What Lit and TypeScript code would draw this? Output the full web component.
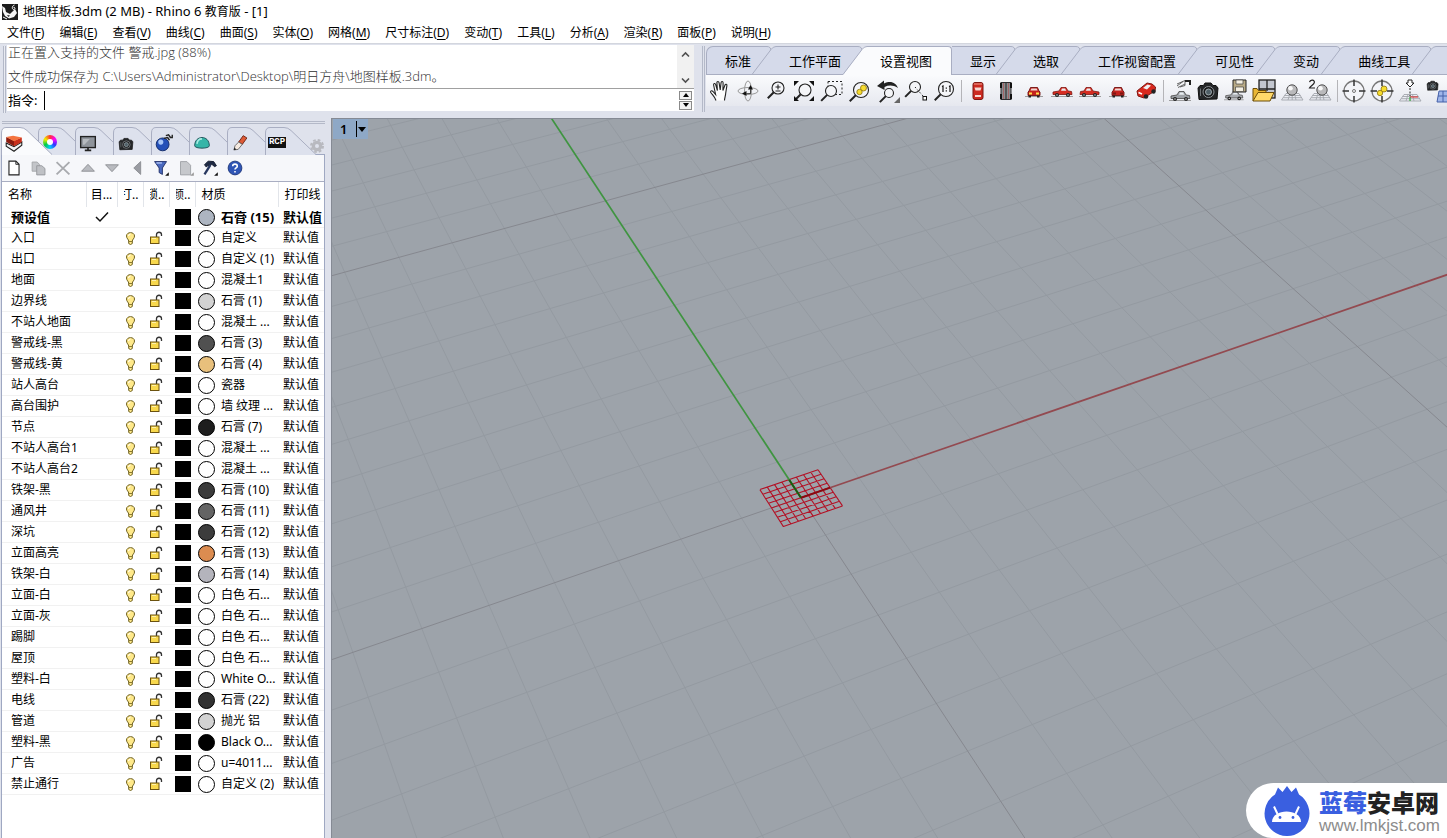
import { LitElement, html, svg, css, nothing, type TemplateResult } from "lit";
import { customElement } from "lit/decorators.js";
import { classMap } from "lit/directives/class-map.js";
import { styleMap } from "lit/directives/style-map.js";

const FONT = css`"Noto Sans", "Noto Sans CJK SC", sans-serif`;

/* ---------- icon drawings, all on a 24 x 24 board ---------- */

const lens = (cx: number, cy: number, r: number) => svg`
  <circle cx=${cx} cy=${cy} r=${r} fill="#f4f5f8" stroke="#222" stroke-width="1.1"/>
  <path d="M${cx - r * 0.7} ${cy + r * 0.7}L${cx - r * 0.7 - 6} ${cy + r * 0.7 + 6}" stroke="#222" stroke-width="2"/>`;

const sideCar = (body: string, dark: string) => svg`
  <path d="M1 17.5H23" stroke="#888" stroke-width="0.8"/>
  <path d="M3 15.5V13L9 12L11 8.500H16L18 12L21.500 12.500L22 15.500Z" fill=${body} stroke=${dark} stroke-width="0.8"/>
  <path d="M11 11.800L12 9.500H15L16.300 11.800Z" fill="#e8eef2"/>
  <circle cx="7" cy="16" r="2" fill="#222"/><circle cx="7" cy="16" r="0.800" fill="#ccc"/>
  <circle cx="18" cy="16" r="2" fill="#222"/><circle cx="18" cy="16" r="0.800" fill="#ccc"/>`;

const frontCar = (lamp: string) => svg`
  <path d="M3 17.500H21" stroke="#888" stroke-width="0.8"/>
  <path d="M7 12L8.500 8.500H15.500L17 12L18 13V16.500H6V13Z" fill="#c5211d" stroke="#701210" stroke-width="0.900"/>
  <path d="M8.500 11.500L9.300 9.500H14.700L15.500 11.500Z" fill="#efd9d6"/>
  <path d="M7 13.500H10V15.500H7ZM14 13.500H17V15.500H14Z" fill=${lamp}/>
  <path d="M6.500 16.500H9V18.500H6.500ZM15 16.500H17.500V18.500H15Z" fill="#222"/>`;

const gridFloor = svg`
  <path d="M6 14.500H19L23 21H1.500ZM4.500 16.500H20.500M3.300 18.700H21.800M10 14.500L8 21M14.500 14.500L16 21M12.200 14.500V21" fill="none" stroke="#a3a6ad" stroke-width="0.9"/>`;

const ball = (cx: number) => svg`
  <circle cx=${cx} cy="11" r="5.200" fill="#b9b9bb" stroke="#444" stroke-width="0.9"/>
  <circle cx=${cx - 1.5} cy="9.300" r="2.300" fill="#f8f8f8"/>`;

const target = svg`
  <circle cx="12" cy="12" r="10" fill="#f3f4f8" stroke="#777" stroke-width="1.3"/>
  <path d="M12 0.500V7M12 17V23.500M0.500 12H7M17 12H23.500" stroke="#333" stroke-width="1.5"/>`;

const camera = svg`
  <path d="M2 9L4 6.500H7.500L9 4H15L17 6.500H20L22 9L21 20L3 20.500Z" fill="#242628" stroke="#101010"/>
  <circle cx="12.500" cy="13" r="5.500" fill="#17191b" stroke="#8c9094"/>
  <circle cx="12.500" cy="13" r="3" fill="#506068" stroke="#b8c0c4" stroke-width="0.8"/>
  <path d="M4.500 9.500V17" stroke="#6d7275"/>`;

const yellowPair = (x: number, y: number) => svg`
  <circle cx=${x + 2.5} cy=${y - 2} r="3" fill="#f7dc2e" stroke="#8c7410" stroke-width="0.8"/>
  <circle cx=${x - 1.5} cy=${y + 2} r="2.700" fill="#f7dc2e" stroke="#8c7410" stroke-width="0.8"/>`;

const ICONS: Record<string, TemplateResult> = {
  pan: svg`<path d="M8 21.500C7 18 4.500 16 2.800 13.500C2 12 3.600 11 5 12.500L7.600 15.500L5.600 6C5.300 4.300 7.200 3.900 7.700 5.600L9.400 11.500L8.900 3.800C8.900 2 10.800 2 11.100 3.800L12.200 11L13.100 3.500C13.400 1.900 15.200 2.200 15.100 3.900L14.900 11.500L17 6C17.600 4.600 19.200 5.200 18.900 6.700L17.800 13.500C17.500 17 16.600 19 16.500 21.500" fill="#fdfdfd" stroke="#222" stroke-width="1.1"/>`,
  orbit: svg`<ellipse cx="12" cy="12" rx="10" ry="3.500" fill="none" stroke="#999"/><ellipse cx="12" cy="12" rx="3.500" ry="10" fill="none" stroke="#999"/><path d="M6 14.500L10.500 12V17ZM14.500 6L12 10.500H17Z" fill="#111"/><path d="M10 14.700L15 14.500M14.500 10V14.500" stroke="#444"/>`,
  zoomPm: svg`${lens(14, 9, 6)}<path d="M11.500 8H16.500M14 5.500V10.500M11.500 12H16.500" stroke="#222" stroke-width="1.1"/>`,
  zoomExt: svg`${lens(13, 11, 6)}<path d="M2 2H7L2 7ZM22 2H17L22 7ZM2 22H7L2 17ZM22 22H17L22 17Z" fill="#111"/>`,
  zoomWin: svg`<rect x="8" y="2.500" width="14" height="13" fill="none" stroke="#222" stroke-dasharray="2 2"/>${lens(11, 12, 5.500)}`,
  zoomSel: svg`${lens(13, 11, 7.500)}${yellowPair(13, 11)}`,
  undoView: svg`<path d="M1 7L8 1.500V4.500C15 1 20 4 22 9C17 6 13 6 8.500 8V11Z" fill="#222"/>${lens(13, 14, 4.500)}<path d="M24 18V24H18Z" fill="#666"/>`,
  zoomTgt: svg`${lens(11, 8, 5.500)}<path d="M11 8L19 17" stroke="#222" stroke-dasharray="1.500 2"/><rect x="19" y="17.500" width="3.500" height="3.500" fill="#fff" stroke="#111"/>`,
  zoom11: svg`${lens(14, 10, 7.500)}<path d="M10 7.500L11 7V13M17 7.500L18 7V13M14.300 8.500V9.700M14.300 11.300V12.500" stroke="#111" stroke-width="1.200" fill="none"/>`,
  carTop: svg`<rect x="7" y="3.500" width="10" height="17" rx="2" fill="#cc2a20" stroke="#7d1712"/><path d="M8.500 8.500H15.500L14.500 11.500H9.500ZM9 16H15V18H9Z" fill="#f6d8d2"/><path d="M8 5H16" stroke="#f0a090"/>`,
  carBottom: svg`<rect x="7" y="3.500" width="10" height="17" fill="#8a8c90" stroke="#2c2c2e"/><path d="M12 4V20" stroke="#444" stroke-width="1.500"/><path d="M7 4V9M17 4V9M7 15V20M17 15V20" stroke="#111" stroke-width="2"/><path d="M9.500 4V20M14.500 4V20" stroke="#a55" stroke-width="0.700"/>`,
  carFront: frontCar("#ffe14a"),
  carRight: sideCar("#d62d22", "#7d1712"),
  carLeft: svg`<g transform="translate(24 0) scale(-1 1)">${sideCar("#d62d22", "#7d1712")}</g>`,
  carBack: frontCar("#7d1712"),
  carPersp: svg`<path d="M3 12L8 8L13 4L18 5L21.500 8L21 12L16 15L10 19L4 17Z" fill="#d8281e" stroke="#7d1712"/><path d="M9 9L13.500 5.500L17 6.500L13 10.500Z" fill="#eef2f5"/><path d="M4.500 13.500L8 15" stroke="#fff" stroke-width="1.500"/><circle cx="12" cy="17.500" r="2.300" fill="#222"/><circle cx="19.500" cy="12.500" r="2.200" fill="#222"/>`,
  carCone: svg`<g transform="translate(0 4)">${sideCar("#9fa3a8", "#444")}</g><path d="M9 5L17 1.500V6.500L12 8M9 7L15 2.500M10 8.500L17 5" fill="none" stroke="#555" stroke-width="0.900"/><path d="M17 1H23V6H21V3H17Z" fill="#222"/>`,
  camera,
  carSave: svg`<g transform="translate(-1 5) scale(0.9)">${sideCar("#a8abb0", "#444")}</g><path d="M9 1H22V13H9Z" fill="#b9ab87" stroke="#222"/><path d="M12 1H19V5H12ZM11.500 8H19.500V12.500H11.500Z" fill="#f4f0e4" stroke="#444" stroke-width="0.700"/>`,
  openView: svg`<rect x="7" y="1" width="16" height="18" fill="#c2c6cf" stroke="#222" stroke-width="1.300"/><path d="M15 1V12M7 10H23" stroke="#222" stroke-width="1.300"/><path d="M1 22V9.500H5L6.500 11.500H14V14" fill="#e9b634" stroke="#6b4d08"/><path d="M1 22L6 13.500H22L18 22Z" fill="#ffd969" stroke="#6b4d08"/>`,
  ballGrid: svg`${gridFloor}${ball(12)}`,
  ballGrid2: svg`${gridFloor}${ball(14)}<path d="M1.500 3.200C2.200 0.200 7 0.600 6.300 3.700C5.900 5.700 2.500 7 1.500 9H7" fill="none" stroke="#222" stroke-width="1.200"/>`,
  target: svg`${target}<circle cx="12" cy="12" r="1.500" fill="none" stroke="#777"/>`,
  targetSel: svg`${target}${yellowPair(11.500, 12)}`,
  plumb: svg`<g transform="translate(0 1)">${gridFloor}</g><path d="M10 1H14V4H16L12 8L8 4H10Z" fill="#fff" stroke="#222"/><path d="M12 9V17" stroke="#222" stroke-dasharray="2 1.500"/><path d="M12 18H20" stroke="#d22"/><path d="M12 18V22" stroke="#2a2"/>`,
  camPlane: svg`<g transform="translate(0 0) scale(0.55)">${camera}</g><path d="M13 12H23V23H11Z" fill="#9fb6ea" stroke="#4560a8"/><path d="M17 12V23M12 17H23" stroke="#4560a8"/>`,

  layers: svg`<path d="M3.500 12L12 16L20.500 11V14.500L12 21L3.500 15.500Z" fill="#f4f4f4" stroke="#222" stroke-width="1.200"/><path d="M3.500 5.500L12 9.500V15.500L3.500 11Z" fill="#8d1c10"/><path d="M12 9.500L20.500 6V11L12 15.500Z" fill="#c9301c"/><path d="M3.500 5.500L11 4L20.500 6L12 10Z" fill="#f4743f"/>`,
  display: svg`<rect x="4" y="5" width="16" height="12" fill="#8f949b" stroke="#222" stroke-width="1.500"/><path d="M6.500 7.500H14L8 14H6.500Z" fill="#b6babf"/><path d="M12 17V19.500M8.500 20H15.500" stroke="#222" stroke-width="1.800"/>`,
  camSmall: svg`<g transform="translate(3 4) scale(0.75)">${camera}</g>`,
  render: svg`<circle cx="10.500" cy="13.500" r="7" fill="#2450b8" stroke="#122a66"/><circle cx="8.500" cy="11" r="2.800" fill="#a8c6f7"/><path d="M14 4L17 3L19 6H21V3M12 7L16 6L18 9" fill="none" stroke="#222" stroke-width="1.500"/>`,
  dome: svg`<path d="M4 15C4 3 20 3 20 15C20 18.500 4 18.500 4 15Z" fill="#36b5a8" stroke="#1d4f55"/><path d="M6.500 13C7 8 10 7.500 12 7.500" stroke="#a8ece2" stroke-width="1.700" fill="none"/>`,
  pen: svg`<path d="M15.500 4L19.500 6.500L14.500 13.500L10.500 11Z" fill="#dd5a36" stroke="#6b2312"/><path d="M10.500 11L14.500 13.500L10 19L5.500 19.500L6.500 15Z" fill="#f5e9df" stroke="#666"/><path d="M5 20L6 17L8 19Z" fill="#222"/>`,
  gear: svg`<circle cx="12" cy="12" r="5.500" fill="none" stroke="#b8b9bf" stroke-width="5"/><circle cx="12" cy="12" r="9" fill="none" stroke="#b8b9bf" stroke-width="3" stroke-dasharray="4 3.070"/>`,

  newDoc: svg`<path d="M6.500 4.500H14L17.500 8V19.500H6.500Z" fill="#fff" stroke="#222" stroke-width="1.200"/><path d="M14 4.500V8H17.500" fill="none" stroke="#222"/>`,
  copyDoc: svg`<path d="M4.500 5.500H10L12.500 8V15.500H4.500Z" fill="#c3c5c9" stroke="#a4a6aa"/><path d="M9.500 9.500H15L18.500 12.500V19.500H9.500Z" fill="#bfc1c5" stroke="#96989c"/>`,
  cross: svg`<path d="M5 5.500L19 19M19 5.500L5 19" stroke="#a8aaae" stroke-width="2"/>`,
  up: svg`<path d="M5 15.500L12 8L19 15.500Z" fill="#b9bbc0" stroke="#8c8e93"/>`,
  down: svg`<path d="M5 8.500L12 16L19 8.500Z" fill="#b9bbc0" stroke="#8c8e93"/>`,
  left: svg`<path d="M16 5V19L8.500 12Z" fill="#9a9ca2" stroke="#8c8e93"/>`,
  filter: svg`<path d="M5 5H18L13.500 12V19L10 17V12Z" fill="#4a69bf" stroke="#1d2c66"/><path d="M7 6.500H13" stroke="#b0c4f5" stroke-width="1.500"/><path d="M20.500 16.500V20.500H16.500Z" fill="#111"/>`,
  sheet: svg`<path d="M6 5H13L17 9V19.500H6Z" fill="#c6c8cc" stroke="#a0a2a6"/><path d="M20.500 16.500V20.500H16.500Z" fill="#999"/>`,
  hammer: svg`<path d="M6 8.500L10 4.500L16 5L19 9.500L17 10.500L14 8L9.500 9.500L8 11Z" fill="#1f2a44" stroke="#10182c"/><path d="M12.500 8.500L6 19" stroke="#27375f" stroke-width="2.500"/><path d="M20.500 16.500V20.500H16.500Z" fill="#111"/>`,
  help: svg`<circle cx="12" cy="12" r="7.500" fill="#2f55b5" stroke="#1c3478"/><path d="M9.500 10C9.500 7 14.500 7 14.500 10C14.500 11.800 12 12 12 13.700M12 15.200V17" fill="none" stroke="#fff" stroke-width="1.700"/>`,
};

const icon = (name: string, size = 24) =>
  html`<svg width=${size} height=${size} viewBox="0 0 24 24" aria-hidden="true">${ICONS[name]}</svg>`;

/* ---------- title and menu ---------- */

const MENUS: [string, string][] = [
  ["文件", "F"], ["编辑", "E"], ["查看", "V"], ["曲线", "C"], ["曲面", "S"], ["实体", "O"], ["网格", "M"],
  ["尺寸标注", "D"], ["变动", "T"], ["工具", "L"], ["分析", "A"], ["渲染", "R"], ["面板", "P"], ["说明", "H"],
];

@customElement("menu-strip")
export class MenuStrip extends LitElement {
  static styles = css`
    :host { display: block; background: #fff; color: #000; font: 12px/20px ${FONT}; }
    .title { display: flex; align-items: center; gap: 5px; height: 23px; padding-left: 2px; }
    .title h1 { margin: 0; font: inherit; font-size: 13px; }
    .cn { font-size: 12px; }
    .menu { display: flex; gap: 15px; height: 20px; padding-left: 7px; }
    .item { border: 0; padding: 0; background: none; font: inherit; color: inherit; white-space: nowrap; }
    .key { text-decoration: underline; text-underline-offset: 2px; }
  `;
  render() {
    return html`
      <header class="title">
        <svg width="16" height="16" viewBox="0 0 16 16" aria-hidden="true">
          <rect width="16" height="16" fill="#1c1c1c"/>
          <path d="M0 2L3 4L4 8L8 10L10 8L13 5L15 9L12 13L7 14.500L3 12L1 8Z" fill="#f4f4f4"/>
          <path d="M5 11L8 11.500L6.500 13Z" fill="#222"/><path d="M12.500 1C10 1.500 9.500 5 11.500 5.500C13.500 5.500 13.500 3 11.500 3.300" fill="none" stroke="#fff"/>
          <path d="M1 13L5 15" stroke="#fff"/>
        </svg>
        <h1><span class="cn">地图样板</span>.3dm (2 MB) - Rhino 6 <span class="cn">教育版</span> - [1]</h1>
      </header>
      <nav class="menu">
        ${MENUS.map(([t, k]) => html`<button class="item">${t}(<span class="key">${k}</span>)</button>`)}
      </nav>`;
  }
}

/* ---------- command history and prompt ---------- */

@customElement("command-area")
export class CommandArea extends LitElement {
  static styles = css`
    :host { display: flex; flex: none; width: 694px; box-sizing: border-box; padding: 1px 0 0 3px; font: 13px/20px ${FONT}; }
    .grip { flex: none; width: 3px; height: 67px; margin-top: 1px; box-sizing: border-box; border: solid #b4b9c8; border-width: 0 1px; background: #e9ebf2; }
    .box { flex: 1; min-width: 0; background: #fff; margin-left: 1px; height: 66px; }
    .history { display: flex; height: 43px; border-bottom: 1px solid #a0a0a0; overflow: hidden; }
    .lines { flex: 1; display: flex; flex-direction: column; justify-content: flex-end; color: #303030; font-family: "Open Sans", "Noto Sans CJK SC", sans-serif; font-weight: 300; }
    .line { margin: 0; line-height: 24px; white-space: nowrap; padding-left: 1px; }
    .scroll { width: 17px; background: #f1f1f1; display: flex; flex-direction: column; justify-content: space-between; align-items: center; padding: 6px 0 4px; box-sizing: border-box; }
    .prompt { display: flex; align-items: center; height: 22px; padding: 0 2px 0 1px; color: #000; }
    .caret { width: 1px; height: 19px; background: #000; margin-left: 7px; }
    .entry { flex: 1; border: 0; outline: 0; padding: 0; font: inherit; background: none; }
    .spin { display: flex; flex-direction: column; gap: 1px; }
    .step { width: 13px; height: 9px; padding: 0; border: 1px solid #8a8a8a; background: #f2f2f2; display: grid; place-items: center; }
  `;
  render() {
    return html`
      <div class="grip"></div>
      <div class="box">
        <div class="history">
          <div class="lines">
            <p class="line">正在置入支持的文件 警戒.jpg (88%)</p>
            <p class="line">文件成功保存为 C:\\Users\\Administrator\\Desktop\\明日方舟\\地图样板.3dm。</p>
          </div>
          <div class="scroll">
            <svg width="9" height="7" viewBox="0 0 9 7"><path d="M1 5.500L4.500 2L8 5.500" fill="none" stroke="#505050" stroke-width="1.600"/></svg>
            <svg width="9" height="7" viewBox="0 0 9 7"><path d="M1 1.500L4.500 5L8 1.500" fill="none" stroke="#505050" stroke-width="1.600"/></svg>
          </div>
        </div>
        <div class="prompt">
          <label for="cmd">指令:</label><span class="caret"></span>
          <input id="cmd" class="entry" type="text" />
          <div class="spin">
            <button class="step" aria-label="上"><svg width="6" height="4"><path d="M0 4L3 0L6 4Z"/></svg></button>
            <button class="step" aria-label="下"><svg width="6" height="4"><path d="M0 0L3 4L6 0Z"/></svg></button>
          </div>
        </div>
      </div>`;
  }
}

/* ---------- tabbed toolbar ---------- */

const TABS = ["标准", "工作平面", "设置视图", "显示", "选取", "工作视窗配置", "可见性", "变动", "曲线工具"];
const ACTIVE = 2;
const TOOLS = [
  "pan", "orbit", "zoomPm", "zoomExt", "zoomWin", "zoomSel", "undoView", "zoomTgt", "zoom11", "|",
  "carTop", "carBottom", "carFront", "carRight", "carLeft", "carBack", "carPersp", "|",
  "carCone", "camera", "carSave", "openView", "ballGrid", "ballGrid2", "|",
  "target", "targetSel", "plumb", "camPlane",
];

@customElement("tool-tabs")
export class ToolTabs extends LitElement {
  static styles = css`
    :host { display: flex; flex: 1; min-width: 0; padding: 2px 0 0 8px; overflow: hidden; font: 13px/20px ${FONT}; }
    .grip { flex: none; width: 3px; height: 66px; box-sizing: border-box; border: solid #b4b9c8; border-width: 0 1px; }
    .col { flex: 1; min-width: 0; margin-left: 1px; }
    .tabs { display: flex; height: 29px; }
    .slant { flex: none; display: block; }
    .tab { flex: none; box-sizing: border-box; height: 29px; padding: 1px 2px 0 13px; border: solid #a9aec2; border-width: 1px 0; background: #d5daea; font: inherit; color: #000; white-space: nowrap; }
    .tab.first { padding: 1px 1px 0 18px; border-left-width: 1px; border-top-left-radius: 7px; }
    .tab.on { background: #fafbfd; padding: 0 19px 0 13px; border-width: 1px 1px 0 0; border-top-right-radius: 4px; }
    .tab.after { padding-left: 18px; padding-right: 0; }
    .rest { flex: 1; background: #d5daea; border: solid #a9aec2; border-width: 1px 0; }
    .tools { display: flex; align-items: center; height: 31px; background: linear-gradient(#fafbfd, #e6e8ef); }
    .tool { flex: none; width: 28px; height: 28px; padding: 0; border: 0; background: none; display: grid; place-items: center; }
    .sep { flex: none; width: 1px; height: 22px; background: #b4b4b8; margin: 0 2px 0 3px; }
  `;
  private slant(on: boolean) {
    return html`<svg class="slant" width="24" height="29" viewBox="0 0 24 29">
      <path d="M0 0.500H14Q19 0.500 19 5V29H0Z" fill="#d5daea"/>
      <path d="M0 0.500H15Q19 0.500 19 5V7" fill="none" stroke="#a9aec2"/>
      <path d="M0 29L19 3.500Q21 0.500 24 0.500V29Z" fill=${on ? "#fafbfd" : "#d5daea"}/>
      <path d="M0 28.500L19 3.500Q21 0.500 24 0.500" fill="none" stroke="#a9aec2"/>
      ${on ? nothing : svg`<path d="M0 28.500H24" stroke="#a9aec2"/>`}
    </svg>`;
  }
  render() {
    return html`
      <div class="grip"></div>
      <div class="col">
        <div class="tabs" role="tablist">
          ${TABS.map((t, i) => html`
            ${i > 0 && i !== ACTIVE + 1 ? this.slant(i === ACTIVE) : nothing}
            <button role="tab" class=${classMap({ tab: true, first: i === 0, on: i === ACTIVE, after: i === ACTIVE + 1 })}>${t}</button>`)}
          ${this.slant(false)}<div class="rest"></div>
        </div>
        <div class="tools">
          ${TOOLS.map((n) => n === "|" ? html`<span class="sep"></span>` : html`<button class="tool" aria-label=${n}>${icon(n)}</button>`)}
        </div>
      </div>`;
  }
}

/* ---------- layer panel ---------- */

interface Layer { name: string; fill: string; material: string; current?: boolean }
const W = "#fff";
const LAYERS: Layer[] = ([
  ["预设值", "#adb5c1", "石膏 (15)"], ["入口", W, "自定义"], ["出口", W, "自定义 (1)"], ["地面", W, "混凝土1"],
  ["边界线", "#d2d2d2", "石膏 (1)"], ["不站人地面", W, "混凝土 ..."], ["警戒线-黑", "#505050", "石膏 (3)"],
  ["警戒线-黄", "#e8c07c", "石膏 (4)"], ["站人高台", W, "瓷器"], ["高台围护", W, "墙 纹理 ..."],
  ["节点", "#1e1e1e", "石膏 (7)"], ["不站人高台1", W, "混凝土 ..."], ["不站人高台2", W, "混凝土 ..."],
  ["铁架-黑", "#3c3c3c", "石膏 (10)"], ["通风井", "#646464", "石膏 (11)"], ["深坑", "#3c3c3c", "石膏 (12)"],
  ["立面高亮", "#dc8c50", "石膏 (13)"], ["铁架-白", "#b4b4bc", "石膏 (14)"], ["立面-白", W, "白色 石..."],
  ["立面-灰", W, "白色 石..."], ["踢脚", W, "白色 石..."], ["屋顶", W, "白色 石..."], ["塑料-白", W, "White O..."],
  ["电线", "#323232", "石膏 (22)"], ["管道", "#d2d2d2", "抛光 铝"], ["塑料-黑", "#000", "Black O..."],
  ["广告", W, "u=4011..."], ["禁止通行", W, "自定义 (2)"],
] as [string, string, string][]).map(([name, fill, material], i) => ({ name, fill, material, current: i === 0 }));

const PANEL_TABS = ["layers", "wheel", "display", "camSmall", "render", "dome", "pen", "rcp"];
const PANEL_TOOLS = ["newDoc", "copyDoc", "cross", "up", "down", "left", "filter", "sheet", "hammer", "help"];

@customElement("layer-panel")
export class LayerPanel extends LitElement {
  static styles = css`
    :host { display: flex; flex-direction: column; flex: none; width: 331px; box-sizing: border-box; padding: 3px 6px 0 1px; background: #dfe2ec; color: #000; font: 12px/20px ${FONT}; }
    .grip { height: 3px; box-sizing: border-box; border: solid #b4b9c8; border-width: 1px 0; margin: 0 0 3px 1px; flex: none; }
    .tabs { display: flex; height: 27px; flex: none; }
    .tab { position: relative; flex: none; width: 38px; height: 27px; padding: 0; border: 0; background: none; }
    .tab:nth-child(-n + 2) { width: 37px; }
    .tab.on { z-index: 1; }
    .shape { position: absolute; left: 0; top: 0; }
    .glyph { position: absolute; left: 2px; top: 5px; width: 20px; height: 20px; display: grid; place-items: center; }
    .wheel { width: 6px; height: 6px; border-radius: 50%; background: #fff; }
    .ring { width: 14px; height: 14px; border-radius: 50%; background: conic-gradient(#f33, #f0f, #33f, #0cf, #0c4, #ee0, #f33); display: grid; place-items: center; }
    .rcp { width: 18px; background: #111; color: #fff; font: bold 9px/11px "Liberation Mono", monospace; text-align: center; }
    .gear { margin: 11px 0 0 auto; width: 16px; height: 16px; padding: 0; border: 0; background: none; z-index: 1; }
    .gear svg { display: block; }
    .panel { flex: 1; border: solid #9fa8c2; border-width: 1px 1px 0; background: #fff; overflow: hidden; box-sizing: border-box; }
    .tools { display: flex; align-items: center; height: 27px; background: #f6f7fa; border-bottom: 1px solid #a9aec2; box-sizing: border-box; }
    .tool { width: 24px; height: 24px; padding: 0; border: 0; background: none; margin-right: 1px; display: grid; place-items: center; }
    .tool:nth-child(even) { margin-right: 0; }
    .layers { width: 100%; border-collapse: collapse; table-layout: fixed; }
    th { height: 25px; padding: 0; text-align: left; font-weight: normal; border-right: 1px solid #e2e5ea; overflow: hidden; white-space: nowrap; }
    th:last-child { border-right: 0; }
    td { height: 20px; padding: 0; border-bottom: 1px solid #f1f1f1; white-space: nowrap; overflow: hidden; line-height: 20px; }
    .name { padding-left: 9px; }
    th.name { padding-left: 6px; }
    .mid { text-align: center; }
    .mid svg { display: block; margin: 0 auto; }
    .clip { display: flex; justify-content: flex-end; width: 15px; margin-left: 6px; overflow: hidden; }
    .swatch { width: 16px; height: 16px; background: #000; margin-left: 6px; }
    .mat { display: flex; align-items: center; gap: 6px; padding-left: 3px; }
    .dot { flex: none; width: 15px; height: 15px; border: 1px solid #000; border-radius: 50%; }
    .print { padding-left: 5px; }
    .current td { font-weight: bold; font-size: 13px; }
  `;
  private glyph(n: string) {
    if (n === "wheel") return html`<span class="ring"><span class="wheel"></span></span>`;
    if (n === "rcp") return html`<span class="rcp">RCP</span>`;
    return icon(n, 22);
  }
  private bulb() {
    return html`<svg width="11" height="15" viewBox="0 0 11 15"><path d="M3.700 10C3.700 8.500 1.500 7.500 1.500 5C1.500 0.500 9.500 0.500 9.500 5C9.500 7.500 7.300 8.500 7.300 10V12.500Q5.500 14.500 3.700 12.500Z" fill="#ffe98a" stroke="#6e6020"/><path d="M3.700 10.500H7.300" stroke="#8a7a30"/><path d="M3.500 5Q4 3 5.500 3" fill="none" stroke="#fff"/></svg>`;
  }
  private lock() {
    return html`<svg width="14" height="14" viewBox="0 0 14 14"><path d="M7.500 6V3.500C7.500 0.500 12.500 0.500 12.500 3.500V5" fill="none" stroke="#333" stroke-width="1.300"/><rect x="1.500" y="6" width="8.500" height="6.500" fill="#f8d84c" stroke="#6b5210"/><path d="M3 7.500H7" stroke="#fff2ae"/></svg>`;
  }
  render() {
    return html`
      <div class="grip"></div>
      <div class="tabs" role="tablist">
        ${PANEL_TABS.map((n, i) => html`
          <button role="tab" aria-label=${n} class=${classMap({ tab: true, on: i === 0 })}>
            <svg class="shape" width=${i === 0 || i === 7 ? 54 : 38} height="28" viewBox="0 0 ${i === 0 || i === 7 ? 54 : 38} 28">
              <path d="M0.500 28V6Q0.500 0.500 5 0.500H19Q23 0.500 26 3.500L51 28Z" fill=${i === 0 ? "#fafbfd" : "#dde1ed"}/>
              <path d="M0.500 28V6Q0.500 0.500 5 0.500H19Q23 0.500 26 3.500L51 27.500" fill="none" stroke="#a9aec2"/>
            </svg>
            <span class="glyph">${this.glyph(n)}</span>
          </button>`)}
        <button class="gear" aria-label="选项">${icon("gear", 16)}</button>
      </div>
      <section class="panel">
        <div class="tools">${PANEL_TOOLS.map((n) => html`<button class="tool" aria-label=${n}>${icon(n, 22)}</button>`)}</div>
        <table class="layers">
          <colgroup>
            ${[84, 31, 26, 26, 26, 83].map((w) => html`<col style=${styleMap({ width: `${w}px` })} />`)}<col />
          </colgroup>
          <thead><tr>
            <th class="name">名称</th><th class="mid">目...</th>
            <th><span class="clip">打..</span></th><th><span class="clip">锁..</span></th><th><span class="clip">颜..</span></th>
            <th class="name">材质</th><th class="name">打印线</th>
          </tr></thead>
          <tbody>
            ${LAYERS.map((l) => html`
              <tr class=${classMap({ current: !!l.current })}>
                <td class="name">${l.name}</td>
                <td class="mid">${l.current ? html`<svg width="14" height="12" viewBox="0 0 14 12"><path d="M1 6L5 10L13 1.500" fill="none" stroke="#111" stroke-width="1.500"/></svg>` : nothing}</td>
                <td class="mid">${l.current ? nothing : this.bulb()}</td>
                <td class="mid">${l.current ? nothing : this.lock()}</td>
                <td><div class="swatch"></div></td>
                <td><div class="mat"><span class="dot" style=${styleMap({ background: l.fill })}></span>${l.material}</div></td>
                <td class="print">默认值</td>
              </tr>`)}
          </tbody>
        </table>
      </section>`;
  }
}

/* ---------- perspective viewport ---------- */

/* Ground plane to screen: one unit is ten grid squares. */
const project = (u: number, v: number): string => {
  const g = 0.12, h = 0.228;
  const w = 1 + g * u + h * v;
  const x = (801 + (1324.6 * (1 + g) - 801) * u + (605.7 * (1 + h) - 801) * v) / w;
  const y = (497.7 + (317 * (1 + g) - 497.7) * u + (200.8 * (1 + h) - 497.7) * v) / w;
  return `${x.toFixed(1)} ${y.toFixed(1)}`;
};
const seg = (a: number, b: number, c: number, d: number) => `M${project(a, b)}L${project(c, d)}`;

@customElement("view-port")
export class ViewPort extends LitElement {
  static styles = css`
    :host { display: block; flex: 1; min-width: 0; position: relative; overflow: hidden; background: #9da3aa; border: solid #858a94; border-width: 1px 0 0 1px; box-sizing: border-box; font-family: ${FONT}; }
    .scene { position: absolute; inset: 0; width: 100%; height: 100%; }
    .tag { position: absolute; left: 1px; top: 0; display: flex; align-items: center; height: 20px; padding: 0 2px 0 7px; background: #8ea8c6; border: 0; color: #000; font: 600 13px/20px ${FONT}; gap: 9px; }
    .arrow { border-left: 1px solid #000; height: 16px; display: flex; align-items: center; }
    .mark { position: absolute; right: 0; bottom: 0; display: flex; align-items: center; gap: 9px; height: 55px; padding: 0 7px 0 17px; background: #fff; border-radius: 28px 0 0 28px; box-sizing: border-box; text-decoration: none; }
    .words { display: flex; flex-direction: column; }
    .brand { font: 900 24px/30px "Noto Sans CJK SC", sans-serif; color: #222; white-space: nowrap; }
    .blue { color: #3a5fe0; }
    .url { font: 17px/17px "Liberation Sans", sans-serif; color: #8c8c8c; }
  `;
  render() {
    let minor = "";
    for (let i = -22; i <= 60; i++) {
      if (i % 10 === 0) continue;
      minor += seg(i / 10, -2.2, i / 10, 6) + seg(-2.2, i / 10, 6, i / 10);
    }
    let patch = "";
    for (let i = -4; i <= 4; i++) {
      const t = i / 80;
      patch += seg(t, -0.05, t, 0.05) + seg(-0.05, t, 0.05, t);
    }
    return html`
      <svg class="scene" viewBox="332 119 1115 719" preserveAspectRatio="xMinYMin slice" fill="none" aria-hidden="true">
        <path d=${minor} stroke="#949aa1" stroke-width="1"/>
        <path d=${seg(1, -2, 1, 5) + seg(-2, 1, 5, 1) + seg(-2.2, 0, 0, 0) + seg(0, -2.2, 0, 0)} stroke="#86888f" stroke-width="1"/>
        <path d=${patch} stroke="#b31226" stroke-width="1.100"/>
        <path d=${seg(0, 0, 4, 0)} stroke="#934a50" stroke-width="1.700"/>
        <path d=${seg(0, 0, 0, 4)} stroke="#3f9440" stroke-width="1.700"/>
        <path d=${seg(0, 0, 0.05, 0)} stroke="#8c0810" stroke-width="2"/>
        <path d=${seg(0, 0, 0, 0.05)} stroke="#1b5a10" stroke-width="2"/>
      </svg>
      <button class="tag">1<span class="arrow"><svg width="9" height="5"><path d="M1 0H9L5 5Z"/></svg></span></button>
      <a class="mark" href="#">
        <svg width="47" height="50" viewBox="0 0 47 50" aria-hidden="true">
          <path d="M23.500 50A22.500 22.500 0 0 1 12 8.500L15 1.500L19.500 6L24 0L28.500 6L33 1.500L36 8.500A22.500 22.500 0 0 1 23.500 50Z" fill="#3a5fe0"/>
          <path d="M9 36C9 22 38 22 38 36Z" fill="#fff"/><path d="M14.500 28L11 20.500M32.500 28L36 20.500" stroke="#fff" stroke-width="2"/>
          <circle cx="17" cy="31.500" r="1.400" fill="#3a5fe0"/><circle cx="30" cy="31.500" r="1.400" fill="#3a5fe0"/>
        </svg>
        <span class="words"><span class="brand"><span class="blue">蓝莓</span>安卓网</span><span class="url">www.lmkjst.com</span></span>
      </a>`;
  }
}

@customElement("app-root")
export class AppRoot extends LitElement {
  static styles = css`
    :host { display: flex; flex-direction: column; min-height: 100vh; background: #dfe2ec; }
    .top { display: flex; height: 74px; flex: none; border-top: 1px solid #d3d6de; }
    .main { flex: 1; display: flex; min-height: 0; }
  `;
  render() {
    return html`
      <menu-strip></menu-strip>
      <div class="top"><command-area></command-area><tool-tabs></tool-tabs></div>
      <main class="main"><layer-panel></layer-panel><view-port></view-port></main>`;
  }
}
